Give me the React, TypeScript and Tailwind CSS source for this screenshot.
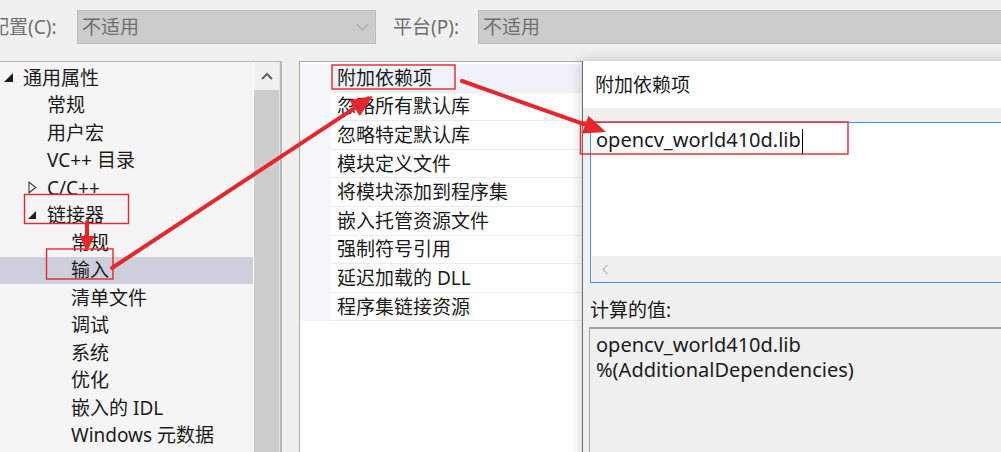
import React from "react";

type TreeItem = { label: string; level: number; toggle?: "open" | "closed"; selected?: boolean };

const treeItems: TreeItem[] = [
  { label: "通用属性", level: 0, toggle: "open" },
  { label: "常规", level: 1 },
  { label: "用户宏", level: 1 },
  { label: "VC++ 目录", level: 1 },
  { label: "C/C++", level: 1, toggle: "closed" },
  { label: "链接器", level: 1, toggle: "open" },
  { label: "常规", level: 2 },
  { label: "输入", level: 2, selected: true },
  { label: "清单文件", level: 2 },
  { label: "调试", level: 2 },
  { label: "系统", level: 2 },
  { label: "优化", level: 2 },
  { label: "嵌入的 IDL", level: 2 },
  { label: "Windows 元数据", level: 2 }
];

const propertyNames = [
  "附加依赖项",
  "忽略所有默认库",
  "忽略特定默认库",
  "模块定义文件",
  "将模块添加到程序集",
  "嵌入托管资源文件",
  "强制符号引用",
  "延迟加载的 DLL",
  "程序集链接资源"
];

const indent = ["pl-[4px]", "pl-[28px]", "pl-[52px]"];

const RED = "#e5262b";

function Toggle({ kind, level }: { kind?: "open" | "closed"; level: number }) {
  if (kind === "open") {
    const s = level === 0 ? 9 : 8;
    return (
      <svg width={s} height={s} viewBox={`0 0 ${s} ${s}`}>
        <path d={`M${s} 0V${s}H0Z`} fill="#1e1e1e" />
      </svg>
    );
  }
  if (kind === "closed") {
    return (
      <svg width="9" height="13" viewBox="0 0 9 13">
        <path d="M1 1.2L7.8 6.5L1 11.8Z" fill="none" stroke="#3a3a3a" strokeWidth="1.1" />
      </svg>
    );
  }
  return null;
}

function Dropdown({ width, arrow }: { width: string; arrow?: boolean }) {
  return (
    <div className={`${width} flex h-[34px] shrink-0 items-center justify-between border border-[#bdbdbd] bg-[#cccccc] pl-[4px] pr-[6px]`}>
      <span className="text-[#6f6f6f]">不适用</span>
      {arrow ? (
        <svg width="13" height="8" viewBox="0 0 13 8">
          <path d="M0.5 0.8L6.5 6.8L12.5 0.8" fill="none" stroke="#a6a6a6" strokeWidth="1.1" />
        </svg>
      ) : null}
    </div>
  );
}

function Arrow({ x1, y1, x2, y2, head, half }: { x1: number; y1: number; x2: number; y2: number; head: number; half: number }) {
  const dx = x2 - x1;
  const dy = y2 - y1;
  const len = Math.hypot(dx, dy);
  const ux = dx / len;
  const uy = dy / len;
  const bx = x2 - ux * head;
  const by = y2 - uy * head;
  const px = -uy;
  const py = ux;
  const points = `${x2},${y2} ${bx + px * half},${by + py * half} ${bx - px * half},${by - py * half}`;
  return (
    <g>
      <line x1={x1} y1={y1} x2={bx + ux * 3} y2={by + uy * 3} stroke={RED} strokeWidth={4} strokeLinecap="round" />
      <polygon points={points} fill={RED} />
    </g>
  );
}

function Annotations() {
  return (
    <svg className="pointer-events-none absolute inset-0 z-10" width="1001" height="452" viewBox="0 0 1001 452">
      <g fill="none" stroke={RED} strokeWidth="1.4">
        <rect x="24.5" y="194.5" width="104" height="29" />
        <rect x="46.5" y="249" width="66.5" height="30" />
        <rect x="332" y="65" width="123" height="24" />
        <rect x="580.5" y="122" width="267.5" height="32" />
      </g>
      <Arrow x1={87} y1={222} x2={87} y2={252} head={16} half={7.5} />
      <Arrow x1={112} y1={268} x2={373} y2={96} head={22} half={9.5} />
      <Arrow x1={462} y1={81} x2={606} y2={132} head={22} half={9.5} />
    </svg>
  );
}

export default function App() {
  return (
    <div className="relative h-[452px] w-[1001px] overflow-hidden bg-[#f0f0f0] font-['Noto_Sans','Noto_Sans_CJK_SC',sans-serif] text-[19px] leading-[26px] text-[#1b1b1b]">
      {/* top bar */}
      <div className="flex items-center pt-[10px]">
        <span className="-ml-[10px] w-[87px] shrink-0 text-[#6f6f6f]">配置(C):</span>
        <Dropdown width="w-[299px]" arrow />
        <span className="ml-[17px] w-[85px] shrink-0 text-[#6f6f6f]">平台(P):</span>
        <Dropdown width="w-[540px]" />
      </div>

      <div className="mt-[17px] flex h-[400px]">
        {/* tree */}
        <div className="flex w-[282px] shrink-0 border-t border-r-2 border-[#b3b8c3]">
          <div className="w-[253px] bg-[#f5f5f5] pt-[2px]">
            {treeItems.map((item, i) => (
              <div
                key={i}
                className={`flex h-[27.5px] items-center ${indent[item.level]} ${item.selected ? "bg-[#cdd0dc]" : ""}`}
              >
                <span className="flex w-[19px] shrink-0 items-center">
                  <Toggle kind={item.toggle} level={item.level} />
                </span>
                <span className="whitespace-nowrap">{item.label}</span>
              </div>
            ))}
          </div>
          <div className="flex w-[27px] flex-col border-l border-r border-l-white border-r-[#e3e3e3] bg-[#f0f0f0]">
            <div className="flex h-[28px] items-center justify-center">
              <svg width="12" height="8" viewBox="0 0 12 8">
                <path d="M1 7L6 2L11 7" fill="none" stroke="#606060" strokeWidth="2" />
              </svg>
            </div>
            <div className="flex-1 bg-[#cdcdcd]" />
          </div>
        </div>

        {/* property grid */}
        <div className="ml-[17px] w-[283px] shrink-0 border-t border-l border-[#a9a9a9] bg-white pt-[2px]">
          {propertyNames.map((name, i) => (
            <div key={i} className={`flex h-[28.6px] ${i === 0 ? "bg-[#eff2f8]" : ""}`}>
              <div className="w-[31px] shrink-0 bg-[#f3f6fb]" />
              <div
                className={`flex flex-1 items-center whitespace-nowrap border-b border-[#ececec] pl-[6px] ${
                  i === 0 ? "bg-[#eff2f8]" : "bg-white"
                }`}
              >
                {name}
              </div>
            </div>
          ))}
        </div>

        {/* edit dialog */}
        <div className="z-[1] flex w-[440px] shrink-0 flex-col border-l border-[#6e6e6e] bg-[#f0f0f0] shadow-[0_0_12px_rgba(0,0,0,0.22)]">
          <div className="flex h-[47px] items-center bg-white pl-[12px]">附加依赖项</div>
          <div className="flex flex-1 flex-col pl-[7px] pt-[14px]">
            <div className="flex h-[161px] flex-col border border-[#3f94dc] bg-white">
              <div className="flex-1 pl-[5px] pt-[4px] text-[20px] leading-[25px]">
                <span>opencv_world410d.lib</span>
                <span className="ml-px inline-block h-[26px] w-px bg-black align-middle" />
              </div>
              <div className="ml-px flex h-[26px] items-center bg-[#f0f0f0] pl-[9px]">
                <svg width="8" height="11" viewBox="0 0 8 11">
                  <path d="M6.5 1L2 5.5L6.5 10" fill="none" stroke="#c2c2c2" strokeWidth="1.6" />
                </svg>
              </div>
            </div>
            <div className="mt-[15px] h-[24px] leading-[24px]">计算的值:</div>
            <div className="-ml-px mt-[5px] flex-1 border border-t-2 border-[#a6a6a6] pl-[6px] pt-[3px] text-[20px] leading-[25px]">
              <div>opencv_world410d.lib</div>
              <div>%(AdditionalDependencies)</div>
            </div>
          </div>
        </div>
      </div>

      <Annotations />
    </div>
  );
}
